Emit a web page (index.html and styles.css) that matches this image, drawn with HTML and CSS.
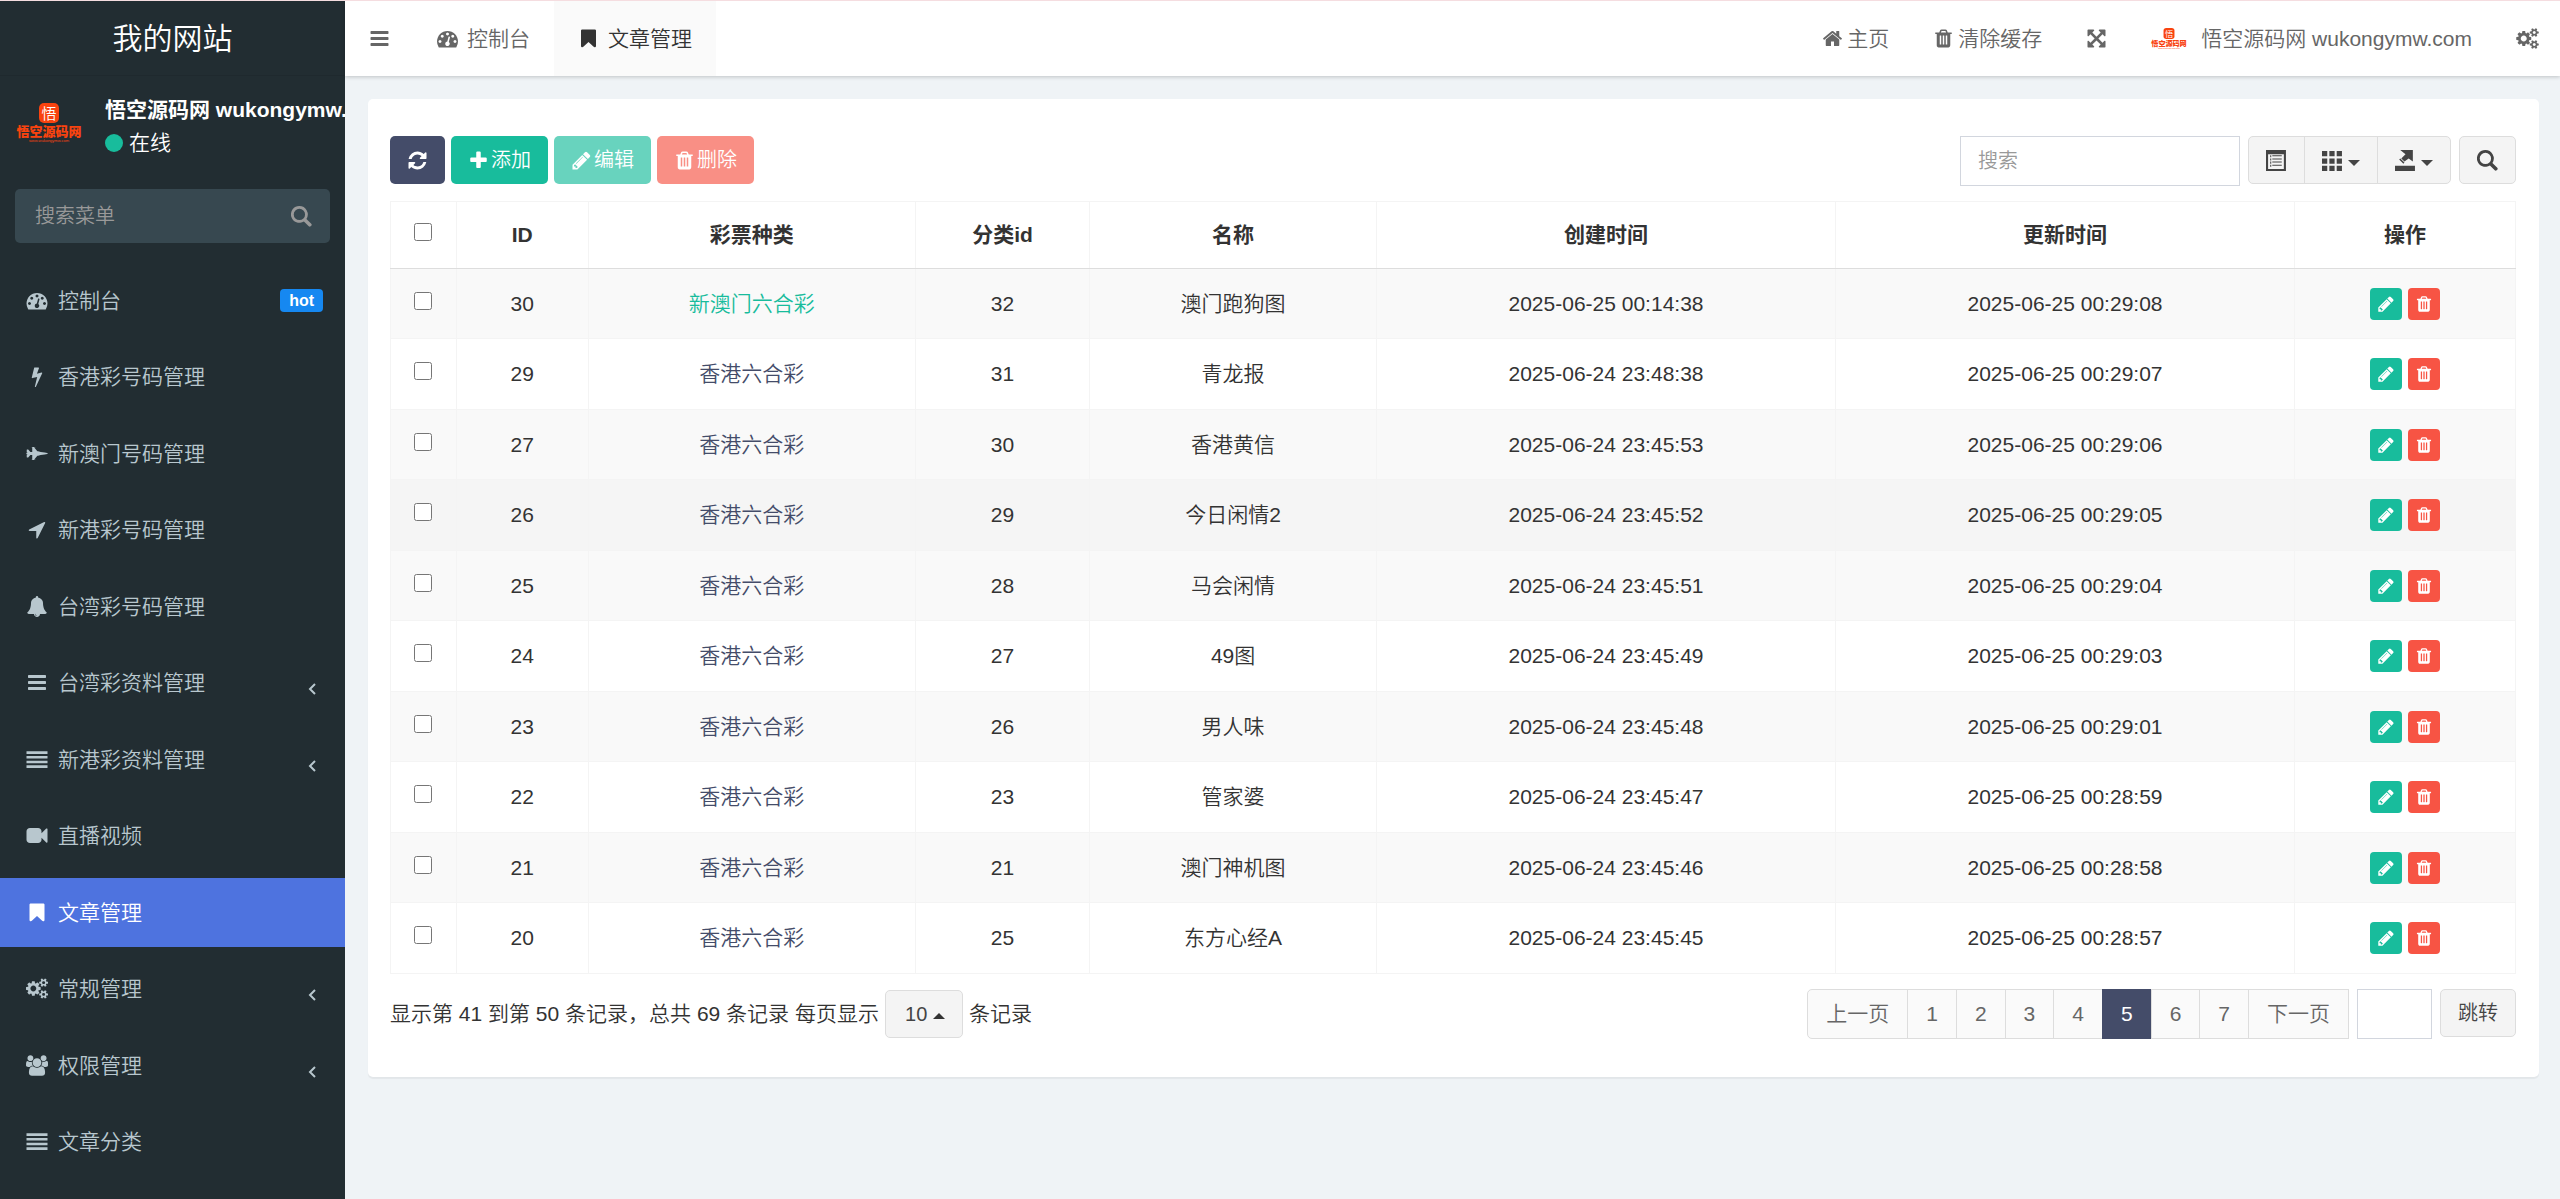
FILE: index.html
```html
<!DOCTYPE html>
<html lang="zh-CN">
<head>
    <meta charset="UTF-8">
    <meta name="viewport" content="width=device-width, initial-scale=1.0">
    <title>文章管理</title>
    <link rel="stylesheet" href="styles.css">
</head>
<body>
    <svg class="sprite" aria-hidden="true">
        <symbol id="bars" viewBox="0 0 1792 1792"><path d="M1664 1344v128q0 26-19 45t-45 19h-1408q-26 0-45-19t-19-45v-128q0-26 19-45t45-19h1408q26 0 45 19t19 45zm0-512v128q0 26-19 45t-45 19h-1408q-26 0-45-19t-19-45v-128q0-26 19-45t45-19h1408q26 0 45 19t19 45zm0-512v128q0 26-19 45t-45 19h-1408q-26 0-45-19t-19-45v-128q0-26 19-45t45-19h1408q26 0 45 19t19 45z"/></symbol>
        <symbol id="align" viewBox="0 0 1792 1792"><path d="M0 192h1792v224H0zM0 592h1792v224H0zM0 992h1792v224H0zM0 1392h1792v224H0z"/></symbol>
        <symbol id="dashboard" viewBox="0 0 1792 1792"><path d="M384 1152q0-53-37.5-90.5t-90.5-37.5-90.5 37.5-37.5 90.5 37.5 90.5 90.5 37.5 90.5-37.5 37.5-90.5zm192-448q0-53-37.5-90.5t-90.5-37.5-90.5 37.5-37.5 90.5 37.5 90.5 90.5 37.5 90.5-37.5 37.5-90.5zm428 481l101-382q6-26-7.5-48.5t-38.5-29.5-48 6.5-30 39.5l-101 382q-60 5-107 43.5t-63 98.5q-20 77 20 146t117 89 146-20 89-117q16-60-6-117t-72-91zm660-33q0-53-37.5-90.5t-90.5-37.5-90.5 37.5-37.5 90.5 37.5 90.5 90.5 37.5 90.5-37.5 37.5-90.5zm-640-640q0-53-37.5-90.5t-90.5-37.5-90.5 37.5-37.5 90.5 37.5 90.5 90.5 37.5 90.5-37.5 37.5-90.5zm448 192q0-53-37.5-90.5t-90.5-37.5-90.5 37.5-37.5 90.5 37.5 90.5 90.5 37.5 90.5-37.5 37.5-90.5zm320 448q0 261-141 483-19 29-54 29h-1402q-35 0-54-29-141-221-141-483 0-182 71-348t191-286 286-191 348-71 348 71 286 191 191 286 71 348z"/></symbol>
        <symbol id="bolt" viewBox="0 0 1792 1792"><path d="M1333 566q18 20 7 44l-540 1157q-13 25-42 25-4 0-14-2-17-5-25.5-19t-4.5-30l197-808-406 101q-4 1-12 1-18 0-31-11-18-15-13-39l201-825q4-14 16-23t28-9h328q19 0 32 12.5t13 29.5q0 8-5 18l-171 463 396-98q8-2 12-2 19 0 34 15z"/></symbol>
        <symbol id="jet" viewBox="0 0 1920 1792"><path d="M1920 896q-1 32-288 96l-352 32-224 64h-64l-293 352h69q26 0 45 4.5t19 11.5-19 11.5-45 4.5h-288v-32h64v-416h-160l-192 224h-96l-32-32v-192h32v-32h128v-8l-192-24v-128l192-24v-8h-128v-32h-32v-192l32-32h96l192 224h160v-416h-64v-32h288q26 0 45 4.5t19 11.5-19 11.5-45 4.5h-69l293 352h64l224 64 352 32q128 28 200 52t80 34z"/></symbol>
        <symbol id="location" viewBox="0 0 1792 1792"><path d="M1593 349l-640 1280q-17 35-57 35-5 0-15-2-22-5-35.5-22.5t-13.5-39.5v-576h-576q-22 0-39.5-13.5t-22.5-35.5 4-42 29-30l1280-640q13-7 29-7 27 0 45 19 15 14 18.5 34.5t-6.5 39.5z"/></symbol>
        <symbol id="bell" viewBox="0 0 1792 1792"><path d="M912 1696q0-16-16-16-59 0-101.5-42.5t-42.5-101.5q0-16-16-16t-16 16q0 73 51.5 124.5t124.5 51.5q16 0 16-16zm816-288q0 52-38 90t-90 38h-448q0 106-75 181t-181 75-181-75-75-181h-448q-52 0-90-38t-38-90q50-42 91-88t85-119.5 74.5-158.5 50-206 19.5-260q0-152 117-282.5t307-158.5q-8-19-8-39 0-40 28-68t68-28 68 28 28 68q0 20-8 39 190 28 307 158.5t117 282.5q0 139 19.5 260t50 206 74.5 158.5 85 119.5 91 88z"/></symbol>
        <symbol id="video" viewBox="0 0 1792 1792"><path d="M1792 352v1088q0 42-39 59-13 5-25 5-27 0-45-19l-403-403v166q0 119-84.5 203.5t-203.5 84.5h-704q-119 0-203.5-84.5t-84.5-203.5v-704q0-119 84.5-203.5t203.5-84.5h704q119 0 203.5 84.5t84.5 203.5v165l403-402q18-19 45-19 12 0 25 5 39 17 39 59z"/></symbol>
        <symbol id="bookmark" viewBox="0 0 1792 1792"><path d="M1420 128q23 0 44 9 33 13 52.5 41t19.5 62v1289q0 34-19.5 62t-52.5 41q-19 8-44 8-48 0-83-32l-441-424-441 424q-36 33-83 33-23 0-44-9-33-13-52.5-41t-19.5-62v-1289q0-34 19.5-62t52.5-41q21-9 44-9h1048z"/></symbol>
        <symbol id="cogs" viewBox="0 0 1920 1792"><path d="M896 896q0-106-75-181t-181-75-181 75-75 181 75 181 181 75 181-75 75-181zm768 512q0-52-38-90t-90-38-90 38-38 90q0 53 37.5 90.5t90.5 37.5 90.5-37.5 37.5-90.5zm0-1024q0-52-38-90t-90-38-90 38-38 90q0 53 37.5 90.5t90.5 37.5 90.5-37.5 37.5-90.5zm-384 421v185q0 10-7 19.5t-16 10.5l-155 24q-11 35-32 76 34 48 90 115 7 11 7 20 0 12-7 19-23 30-82.5 89.5t-78.5 59.5q-11 0-21-7l-115-90q-37 19-77 31-11 108-23 155-7 24-30 24h-186q-11 0-20-7.5t-10-17.5l-23-153q-34-10-75-31l-118 89q-7 7-20 7-11 0-21-8-144-133-144-160 0-9 7-19 10-14 41-53t47-61q-23-44-35-82l-152-24q-10-1-17-9.5t-7-19.5v-185q0-10 7-19.5t16-10.5l155-24q11-35 32-76-34-48-90-115-7-11-7-20 0-12 7-20 22-30 82-89t79-59q11 0 21 7l115 90q34-18 77-32 11-108 23-154 7-24 30-24h186q11 0 20 7.5t10 17.5l23 153q34 10 75 31l118-89q8-7 20-7 11 0 21 8 144 133 144 160 0 8-7 19-12 16-42 54t-45 60q23 48 34 82l152 23q10 2 17 10.5t7 19.5zm640 533v140q0 16-149 31-12 27-30 52 51 113 51 138 0 4-4 7-122 71-124 71-8 0-46-47t-52-68q-20 2-30 2t-30-2q-14 21-52 68t-46 47q-2 0-124-71-4-3-4-7 0-25 51-138-18-25-30-52-149-15-149-31v-140q0-16 149-31 13-29 30-52-51-113-51-138 0-4 4-7 4-2 35-20t59-34 30-16q8 0 46 46.5t52 67.5q20-2 30-2t30 2q51-71 92-112l6-2q4 0 124 70 4 3 4 7 0 25-51 138 17 23 30 52 149 15 149 31zm0-1024v140q0 16-149 31-12 27-30 52 51 113 51 138 0 4-4 7-122 71-124 71-8 0-46-47t-52-68q-20 2-30 2t-30-2q-14 21-52 68t-46 47q-2 0-124-71-4-3-4-7 0-25 51-138-18-25-30-52-149-15-149-31v-140q0-16 149-31 13-29 30-52-51-113-51-138 0-4 4-7 4-2 35-20t59-34 30-16q8 0 46 46.5t52 67.5q20-2 30-2t30 2q51-71 92-112l6-2q4 0 124 70 4 3 4 7 0 25-51 138 17 23 30 52 149 15 149 31z"/></symbol>
        <symbol id="group" viewBox="0 0 1920 1792"><path d="M593 896q-162 5-265 128h-134q-82 0-138-40.5t-56-118.5q0-353 124-353 6 0 43.5 21t97.5 42.5 119 21.5q67 0 133-23-5 37-5 66 0 159 93 293zm1071 637q0 120-73 189.5t-194 69.5h-874q-121 0-194-69.5t-73-189.5q0-53 3.5-103.5t14-109 26.5-108.5 43-97.5 62-81 85.5-53.5 111.5-20q10 0 43 21.5t73 48 107 48 135 21.5 135-21.5 107-48 73-48 43-21.5q61 0 111.5 20t85.5 53.5 62 81 43 97.5 26.5 108.5 14 109 3.5 103.5zm-1024-1277q0 106-75 181t-181 75-181-75-75-181 75-181 181-75 181 75 75 181zm704 384q0 159-112.5 271.5t-271.5 112.5-271.5-112.5-112.5-271.5 112.5-271.5 271.5-112.5 271.5 112.5 112.5 271.5zm576 225q0 78-56 118.5t-138 40.5h-134q-103-123-265-128 93-134 93-293 0-29-5-66 66 23 133 23 59 0 119-21.5t97.5-42.5 43.5-21q124 0 124 353zm-128-609q0 106-75 181t-181 75-181-75-75-181 75-181 181-75 181 75 75 181z"/></symbol>
        <symbol id="home" viewBox="0 0 1792 1792"><path d="M1472 992v480q0 26-19 45t-45 19h-384v-384h-256v384h-384q-26 0-45-19t-19-45v-480q0-1 .5-3t.5-3l575-474 575 474q1 2 1 6zm223-69l-62 74q-8 9-21 11h-3q-13 0-21-7l-692-577-692 577q-12 8-24 7-13-2-21-11l-62-74q-8-10-7-23.5t11-21.5l719-599q32-26 76-26t76 26l244 204v-195q0-14 9-23t23-9h192q14 0 23 9t9 23v408l219 182q10 8 11 21.5t-7 23.5z"/></symbol>
        <symbol id="trash" viewBox="0 0 1792 1792"><path d="M704 1376v-704q0-14-9-23t-23-9h-64q-14 0-23 9t-9 23v704q0 14 9 23t23 9h64q14 0 23-9t9-23zm256 0v-704q0-14-9-23t-23-9h-64q-14 0-23 9t-9 23v704q0 14 9 23t23 9h64q14 0 23-9t9-23zm256 0v-704q0-14-9-23t-23-9h-64q-14 0-23 9t-9 23v704q0 14 9 23t23 9h64q14 0 23-9t9-23zm-544-992h448l-48-117q-7-9-17-11h-317q-10 2-17 11zm928 32v64q0 14-9 23t-23 9h-96v948q0 83-47 143.5t-113 60.5h-832q-66 0-113-58.5t-47-141.5v-952h-96q-14 0-23-9t-9-23v-64q0-14 9-23t23-9h309l70-167q15-37 54-63t79-26h320q40 0 79 26t54 63l70 167h309q14 0 23 9t9 23z"/></symbol>
        <symbol id="arrows" viewBox="0 0 1792 1792"><path d="M1411 541l-355 355 355 355 144-144q29-31 70-14 39 17 39 59v448q0 26-19 45t-45 19h-448q-42 0-59-40-17-39 14-69l144-144-355-355-355 355 144 144q31 30 14 69-17 40-59 40h-448q-26 0-45-19t-19-45v-448q0-42 40-59 39-17 69 14l144 144 355-355-355-355-144 144q-19 19-45 19-12 0-24-5-40-17-40-59v-448q0-26 19-45t45-19h448q42 0 59 40 17 39-14 69l-144 144 355 355 355-355-144-144q-31-30-14-69 17-40 59-40h448q26 0 45 19t19 45v448q0 42-39 59-13 5-25 5-26 0-45-19z"/></symbol>
        <symbol id="refresh" viewBox="0 0 1792 1792"><path d="M1639 1056q0 5-1 7-64 268-268 434.5t-478 166.5q-146 0-282.5-55t-243.5-157l-129 129q-19 19-45 19t-45-19-19-45v-448q0-26 19-45t45-19h448q26 0 45 19t19 45-19 45l-137 137q71 66 161 102t187 36q134 0 250-65t186-179q11-17 53-117 8-23 30-23h192q13 0 22.5 9.5t9.5 22.5zm25-800v448q0 26-19 45t-45 19h-448q-26 0-45-19t-19-45 19-45l138-138q-148-137-349-137-134 0-250 65t-186 179q-11 17-53 117-8 23-30 23h-199q-13 0-22.5-9.5t-9.5-22.5v-7q65-268 270-434.5t480-166.5q146 0 284 55.5t245 156.5l130-129q19-19 45-19t45 19 19 45z"/></symbol>
        <symbol id="plus" viewBox="0 0 1792 1792"><path d="M1600 736v192q0 40-28 68t-68 28h-416v416q0 40-28 68t-68 28h-192q-40 0-68-28t-28-68v-416h-416q-40 0-68-28t-28-68v-192q0-40 28-68t68-28h416v-416q0-40 28-68t68-28h192q40 0 68 28t28 68v416h416q40 0 68 28t28 68z"/></symbol>
        <symbol id="pencil" viewBox="0 0 1792 1792"><path d="M491 1536l91-91-235-235-91 91v107h128v128h107zm523-928q0-22-22-22-10 0-17 7l-542 542q-7 7-7 17 0 22 22 22 10 0 17-7l542-542q7-7 7-17zm-54-192l416 416-832 832h-416v-416zm683 96q0 53-37 90l-166 166-416-416 166-165q36-38 90-38 53 0 91 38l235 234q37 39 37 91z"/></symbol>
        <symbol id="search" viewBox="0 0 20 20"><path d="M8 0a8 8 0 1 0 4.300 14.700l4.600 4.600a1.300 1.300 0 0 0 1.800 0l.6-.6a1.300 1.300 0 0 0 0-1.800l-4.600-4.600A8 8 0 0 0 8 0zm0 2.600a5.400 5.400 0 1 1 0 10.800 5.400 5.400 0 0 1 0-10.800z"/></symbol>
        <symbol id="listalt" viewBox="0 0 20 20"><path fill-rule="evenodd" d="M0 0h19v20H0zM2 4v14h15V4zM4 5h1v2H4zM6 5h9v1H6zM4 8h1v2H4zM6 8h9v1H6zM4 11h1v2H4zM6 11h9v1H6zM4 14h1v2H4zM6 14h9v1H6z"/></symbol>
        <symbol id="grid" viewBox="0 0 20 20"><path d="M0 1h5v5H0zM7 1h5v5H7zM14 1h5v5h-5zM0 8h5v5H0zM7 8h5v5H7zM14 8h5v5h-5zM0 15h5v5H0zM7 15h5v5H7zM14 15h5v5h-5z"/></symbol>
        <symbol id="export" viewBox="0 0 20 20"><path d="M0 15h19v5H0zM5 0h12v11l-4-3-4 3-3-3 4-4zM5 8l4 4-1 1-4-4z"/></symbol>
        <symbol id="angle" viewBox="0 0 8 12"><path d="M7 1L2 6l5 5" fill="none" stroke="currentColor" stroke-width="2"/></symbol>
        <symbol id="down" viewBox="0 0 12 6"><path d="M0 0h12L6 6z"/></symbol>
        <symbol id="up" viewBox="0 0 12 6"><path d="M0 6h12L6 0z"/></symbol>
    </svg>

    <aside class="sidebar">
        <a class="brand" href="#">我的网站</a>
        <div class="user-panel">
            <svg class="avatar" viewBox="0 0 66 40">
                <rect x="23" y="0" width="20" height="20" rx="5"/>
                <text class="logo-mark" x="33" y="16">悟</text>
                <text class="logo-name" x="33" y="33">悟空源码网</text>
                <text class="logo-url" x="33" y="39">www.wukongymw.com</text>
            </svg>
            <div class="user-info">
                <strong>悟空源码网 wukongymw.com</strong>
                <span class="status"><i class="dot"></i>在线</span>
            </div>
        </div>
        <form class="menu-search">
            <input type="text" placeholder="搜索菜单" aria-label="搜索菜单">
            <button type="button" aria-label="搜索"><svg class="icon"><use href="#search"/></svg></button>
        </form>
        <ul class="menu">
            <li><a href="#"><svg class="icon"><use href="#dashboard"/></svg>控制台<span class="badge">hot</span></a></li>
            <li><a href="#"><svg class="icon"><use href="#bolt"/></svg>香港彩号码管理</a></li>
            <li><a href="#"><svg class="icon"><use href="#jet"/></svg>新澳门号码管理</a></li>
            <li><a href="#"><svg class="icon"><use href="#location"/></svg>新港彩号码管理</a></li>
            <li><a href="#"><svg class="icon"><use href="#bell"/></svg>台湾彩号码管理</a></li>
            <li><a href="#"><svg class="icon"><use href="#bars"/></svg>台湾彩资料管理<svg class="angle"><use href="#angle"/></svg></a></li>
            <li><a href="#"><svg class="icon"><use href="#align"/></svg>新港彩资料管理<svg class="angle"><use href="#angle"/></svg></a></li>
            <li><a href="#"><svg class="icon"><use href="#video"/></svg>直播视频</a></li>
            <li class="active"><a href="#"><svg class="icon"><use href="#bookmark"/></svg>文章管理</a></li>
            <li><a href="#"><svg class="icon"><use href="#cogs"/></svg>常规管理<svg class="angle"><use href="#angle"/></svg></a></li>
            <li><a href="#"><svg class="icon"><use href="#group"/></svg>权限管理<svg class="angle"><use href="#angle"/></svg></a></li>
            <li><a href="#"><svg class="icon"><use href="#align"/></svg>文章分类</a></li>
        </ul>
    </aside>

    <div class="wrapper">
        <header class="navbar">
            <button class="toggle" aria-label="菜单"><svg class="icon"><use href="#bars"/></svg></button>
            <nav class="tabs">
                <a href="#"><svg class="icon"><use href="#dashboard"/></svg>控制台</a>
                <a href="#" class="active"><svg class="icon"><use href="#bookmark"/></svg>文章管理</a>
            </nav>
            <nav class="nav-right">
                <a href="#"><svg class="icon"><use href="#home"/></svg>主页</a>
                <a href="#"><svg class="icon"><use href="#trash"/></svg>清除缓存</a>
                <a href="#" aria-label="全屏"><svg class="icon"><use href="#arrows"/></svg></a>
                <a href="#" class="account">
                    <svg class="mini-logo" viewBox="0 0 66 40">
                        <rect x="23" y="0" width="20" height="20" rx="5"/>
                        <text class="logo-mark" x="33" y="16">悟</text>
                        <text class="logo-name" x="33" y="33">悟空源码网</text>
                        <text class="logo-url" x="33" y="39">www.wukongymw.com</text>
                    </svg>
                    悟空源码网 wukongymw.com
                </a>
                <a href="#" aria-label="设置"><svg class="icon icon-wide"><use href="#cogs"/></svg></a>
            </nav>
        </header>

        <main class="content">
            <section class="panel">
                <div class="toolbar">
                    <button class="btn btn-primary" aria-label="刷新"><svg class="icon"><use href="#refresh"/></svg></button>
                    <button class="btn btn-success"><svg class="icon"><use href="#plus"/></svg>添加</button>
                    <button class="btn btn-success disabled"><svg class="icon"><use href="#pencil"/></svg>编辑</button>
                    <button class="btn btn-danger disabled"><svg class="icon"><use href="#trash"/></svg>删除</button>
                    <div class="tools">
                        <input class="search-input" type="text" placeholder="搜索" aria-label="搜索">
                        <div class="btn-group">
                            <button class="btn btn-default" aria-label="切换"><svg class="icon"><use href="#listalt"/></svg></button>
                            <button class="btn btn-default" aria-label="列"><svg class="icon"><use href="#grid"/></svg><svg class="caret"><use href="#down"/></svg></button>
                            <button class="btn btn-default" aria-label="导出"><svg class="icon"><use href="#export"/></svg><svg class="caret"><use href="#down"/></svg></button>
                        </div>
                        <button class="btn btn-default" aria-label="普通搜索"><svg class="icon"><use href="#search"/></svg></button>
                    </div>
                </div>

                <table class="table">
                    <colgroup>
                        <col class="col-check"><col class="col-id"><col class="col-type"><col class="col-cate">
                        <col class="col-name"><col class="col-time"><col class="col-time"><col>
                    </colgroup>
                    <thead>
                        <tr>
                            <th><input type="checkbox" aria-label="全选"></th>
                            <th>ID</th>
                            <th>彩票种类</th>
                            <th>分类id</th>
                            <th>名称</th>
                            <th>创建时间</th>
                            <th>更新时间</th>
                            <th>操作</th>
                        </tr>
                    </thead>
                    <tbody id="rows"></tbody>
                </table>

                <div class="table-footer">
                    <div class="page-info">
                        <span>显示第 41 到第 50 条记录，总共 69 条记录</span>
                        <label for="pageSize">每页显示</label>
                        <span class="page-size">
                            <select id="pageSize"><option>10</option><option>25</option><option>50</option></select>
                            <svg class="caret"><use href="#up"/></svg>
                        </span>
                        <span>条记录</span>
                    </div>
                    <ul class="pagination">
                        <li><a href="#">上一页</a></li>
                        <li><a href="#">1</a></li>
                        <li><a href="#">2</a></li>
                        <li><a href="#">3</a></li>
                        <li><a href="#">4</a></li>
                        <li class="active"><a href="#">5</a></li>
                        <li><a href="#">6</a></li>
                        <li><a href="#">7</a></li>
                        <li><a href="#">下一页</a></li>
                    </ul>
                    <input class="jump-input" type="text" aria-label="页码">
                    <button class="btn btn-default">跳转</button>
                </div>
            </section>
        </main>
    </div>

    <script>
        const rows = [
            { id: 30, type: "新澳门六合彩", cate: 32, name: "澳门跑狗图", created: "2025-06-25 00:14:38", updated: "2025-06-25 00:29:08" },
            { id: 29, type: "香港六合彩", cate: 31, name: "青龙报", created: "2025-06-24 23:48:38", updated: "2025-06-25 00:29:07" },
            { id: 27, type: "香港六合彩", cate: 30, name: "香港黄信", created: "2025-06-24 23:45:53", updated: "2025-06-25 00:29:06" },
            { id: 26, type: "香港六合彩", cate: 29, name: "今日闲情2", created: "2025-06-24 23:45:52", updated: "2025-06-25 00:29:05", hover: true },
            { id: 25, type: "香港六合彩", cate: 28, name: "马会闲情", created: "2025-06-24 23:45:51", updated: "2025-06-25 00:29:04" },
            { id: 24, type: "香港六合彩", cate: 27, name: "49图", created: "2025-06-24 23:45:49", updated: "2025-06-25 00:29:03" },
            { id: 23, type: "香港六合彩", cate: 26, name: "男人味", created: "2025-06-24 23:45:48", updated: "2025-06-25 00:29:01" },
            { id: 22, type: "香港六合彩", cate: 23, name: "管家婆", created: "2025-06-24 23:45:47", updated: "2025-06-25 00:28:59" },
            { id: 21, type: "香港六合彩", cate: 21, name: "澳门神机图", created: "2025-06-24 23:45:46", updated: "2025-06-25 00:28:58" },
            { id: 20, type: "香港六合彩", cate: 25, name: "东方心经A", created: "2025-06-24 23:45:45", updated: "2025-06-25 00:28:57" }
        ];

        document.getElementById("rows").innerHTML = rows.map(row =>
            `<tr class="${row.hover ? 'hover' : ''}">
                <td><input type="checkbox" aria-label="选择 ${row.id}"></td>
                <td>${row.id}</td>
                <td><a href="#" class="${row.type === '新澳门六合彩' ? 'text-success' : 'text-primary'}">${row.type}</a></td>
                <td>${row.cate}</td>
                <td>${row.name}</td>
                <td>${row.created}</td>
                <td>${row.updated}</td>
                <td>
                    <div class="actions">
                        <button class="btn-xs btn-success" aria-label="编辑"><svg class="icon"><use href="#pencil"/></svg></button>
                        <button class="btn-xs btn-danger" aria-label="删除"><svg class="icon"><use href="#trash"/></svg></button>
                    </div>
                </td>
            </tr>`
        ).join('');
    </script>
</body>
</html>
```

FILE: styles.css
```css
* {
    box-sizing: border-box;
    margin: 0;
    padding: 0;
}
body {
    display: flex;
    min-height: 100vh;
    border-top: 1px solid #f5dde0;
    background: #eff3f6;
    color: #333;
    font-family: "Liberation Sans", "Noto Sans CJK SC", sans-serif;
    font-size: 21px;
    font-weight: 350;
    line-height: 30px;
}
a {
    color: inherit;
    text-decoration: none;
}
ul {
    list-style: none;
}
button, input, select {
    font: inherit;
    color: inherit;
}
button {
    cursor: pointer;
}
svg {
    flex: none;
    fill: currentColor;
}
.sprite {
    position: absolute;
    width: 0;
    height: 0;
}
.icon {
    width: 21px;
    height: 21px;
}
.icon-wide {
    width: 23px;
}
.caret {
    width: 12px;
    height: 6px;
}

/* logo */
.avatar, .mini-logo {
    overflow: visible;
    fill: #f9430f;
    text-anchor: middle;
}
.avatar {
    width: 66px;
    height: 40px;
}
.mini-logo {
    width: 36px;
    height: 22px;
}
.logo-mark {
    font-size: 15px;
    fill: #fff;
}
.logo-name {
    font-size: 13px;
    font-weight: 900;
}
.logo-url {
    font-size: 4px;
}

/* sidebar */
.sidebar {
    flex: none;
    width: 345px;
    background: #222d32;
    color: #b8c7ce;
    overflow: hidden;
}
.brand {
    display: block;
    height: 75px;
    line-height: 75px;
    border-bottom: 1px solid #1f292e;
    text-align: center;
    font-size: 30px;
    color: #fff;
}
.user-panel {
    display: flex;
    align-items: center;
    gap: 23px;
    height: 93px;
    padding-left: 16px;
    color: #fff;
    white-space: nowrap;
}
.user-info {
    padding-top: 10px;
}
.user-info strong {
    display: block;
    font-weight: bold;
}
.status {
    display: flex;
    align-items: center;
    gap: 6px;
    height: 36px;
}
.dot {
    width: 18px;
    height: 18px;
    border-radius: 50%;
    background: #18bc9c;
}
.menu-search {
    display: flex;
    height: 54px;
    margin: 20px 15px 23px;
    border-radius: 5px;
    background: #374850;
}
.menu-search input {
    flex: 1;
    min-width: 0;
    padding-left: 20px;
    border: 0;
    background: none;
    font-size: 20px;
}
.menu-search button {
    width: 58px;
    border: 0;
    background: none;
    color: #999;
}
::placeholder {
    color: #999;
}
.menu-search button .icon {
    display: block;
    margin: auto;
}
.menu li {
    margin-bottom: 7px;
}
.menu li:nth-child(even) {
    margin-bottom: 8px;
}
.menu a {
    display: flex;
    align-items: center;
    gap: 10px;
    height: 69px;
    padding: 0 22px 0 26px;
}
.menu .icon {
    width: 22px;
}
.menu .active a {
    background: #4e73df;
    color: #fff;
}
.badge {
    margin-left: auto;
    padding: 0 9px;
    border-radius: 4px;
    background: #1688f1;
    color: #fff;
    font-size: 16px;
    font-weight: bold;
    line-height: 23px;
}
.angle {
    width: 8px;
    height: 12px;
    margin: 12px 7px 0 auto;
}

/* top bar */
.wrapper {
    flex: 1;
    min-width: 0;
}
.navbar {
    display: flex;
    height: 75px;
    background: #fff;
    color: #666;
    box-shadow: 0 1px 4px rgba(0, 0, 0, 0.2);
}
.toggle {
    width: 68px;
    border: 0;
    background: none;
}
.toggle .icon {
    display: block;
    margin: auto;
}
.tabs, .nav-right {
    display: flex;
}
.tabs a, .nav-right a {
    display: flex;
    align-items: center;
}
.tabs a {
    gap: 9px;
    padding: 0 24px;
}
.tabs .active {
    background: #fafafa;
    color: #333;
}
.nav-right {
    margin-left: auto;
    padding-right: 21px;
    gap: 44px;
}
.nav-right a {
    gap: 4px;
}
.nav-right .account {
    gap: 14px;
}

/* panel */
.content {
    padding: 23px 21px 23px 23px;
}
.panel {
    padding: 37px 23px 38px 22px;
    border-radius: 5px;
    background: #fff;
    box-shadow: 0 2px 1px rgba(0, 0, 0, 0.05);
}
.toolbar, .tools, .btn-group {
    display: flex;
    align-items: flex-start;
}
.toolbar {
    gap: 6px;
    height: 65px;
}
.tools {
    gap: 8px;
    margin-left: auto;
}
.btn {
    display: flex;
    align-items: center;
    justify-content: center;
    gap: 2px;
    height: 48px;
    padding: 0 16px;
    border: 1px solid transparent;
    border-radius: 5px;
    font-size: 20px;
    color: #fff;
}
.btn-primary {
    background: #444c69;
}
.btn-success {
    background: #18bc9c;
}
.btn-danger {
    background: #f75444;
}
.disabled {
    opacity: 0.65;
}
.btn-default {
    padding: 0 17px;
    border-color: #ddd;
    background: #f4f4f4;
    color: #444;
}
.btn-group .btn + .btn {
    margin-left: -1px;
}
.btn-group .btn {
    border-radius: 0;
}
.btn-group .btn:first-child {
    border-radius: 5px 0 0 5px;
}
.btn-group .btn:last-child {
    border-radius: 0 5px 5px 0;
}
.tools .caret {
    margin: 5px 0 0 3px;
}
.search-input, .jump-input {
    height: 50px;
    padding: 0 17px;
    border: 1px solid #d2d6de;
    background: #fff;
    font-size: 20px;
}
.search-input {
    width: 280px;
}

/* table */
.table {
    width: 100%;
    table-layout: fixed;
    border-collapse: collapse;
    text-align: center;
}
.col-check {
    width: 3.1%;
}
.col-id {
    width: 6.2%;
}
.col-type {
    width: 15.4%;
}
.col-cate {
    width: 8.2%;
}
.col-name {
    width: 13.5%;
}
.col-time {
    width: 21.6%;
}
.table th, .table td {
    border: 1px solid #f4f4f4;
    vertical-align: middle;
}
.table th {
    height: 67px;
    border-bottom: 1px solid #ddd;
    font-weight: bold;
}
.table td {
    height: 70px;
}
.table tr:nth-child(even) td {
    height: 71px;
}
.table tbody tr:nth-child(odd) {
    background: #f9f9f9;
}
.table tbody .hover {
    background: #f5f5f5;
}
.table input {
    display: block;
    width: 18px;
    height: 18px;
    margin: 0 auto 6px;
}
.text-success {
    color: #18bc9c;
}
.text-primary {
    color: #444c69;
}
.actions {
    display: flex;
    justify-content: center;
    gap: 6px;
}
.btn-xs {
    width: 32px;
    height: 32px;
    border: 0;
    border-radius: 4px;
    color: #fff;
}
.btn-xs .icon {
    display: block;
    width: 18px;
    height: 18px;
    margin: auto;
}

/* footer */
.table-footer {
    display: flex;
    gap: 8px;
    padding-top: 15px;
}
.page-info {
    display: flex;
    align-items: center;
    gap: 6px;
    margin-right: auto;
}
.page-size {
    display: inline-grid;
    align-items: center;
}
.page-size select, .page-size .caret {
    grid-area: 1 / 1;
}
.page-size select {
    width: 78px;
    height: 48px;
    padding-left: 19px;
    border: 1px solid #ddd;
    border-radius: 5px;
    background: #f4f4f4;
    color: #444;
    font-size: 20px;
    appearance: none;
}
.page-size .caret {
    margin: 4px 0 0 48px;
    pointer-events: none;
}
.pagination {
    display: flex;
}
.pagination a {
    display: block;
    height: 50px;
    margin-left: -1px;
    padding: 0 18px;
    border: 1px solid #ddd;
    background: #fafafa;
    color: #666;
    line-height: 48px;
}
.pagination li:first-child a {
    border-radius: 5px 0 0 5px;
}
.pagination .active a {
    border-color: #444c69;
    background: #444c69;
    color: #fff;
}
.jump-input {
    width: 75px;
}
```
